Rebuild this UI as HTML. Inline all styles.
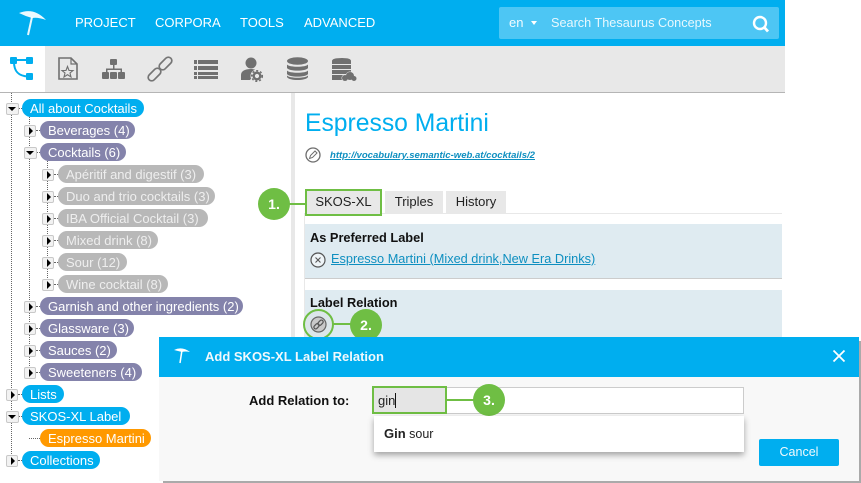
<!DOCTYPE html>
<html><head><meta charset="utf-8">
<style>
html,body{margin:0;padding:0;background:#fff}
body{width:861px;height:483px;position:relative;overflow:hidden;font-family:"Liberation Sans",sans-serif}
.a{position:absolute}
.nav{position:absolute;top:14px;color:#fff;font-size:13px;line-height:17px;white-space:nowrap}
.p{position:absolute;height:18px;border-radius:9px;color:#fff;font-size:13px;line-height:19px;padding-left:8px;box-sizing:border-box;white-space:nowrap}
.b{background:#00aeef}.v{background:#8483ab}.g{background:#b8b8b8;color:#eee}.o{background:#ff9900}
.t{position:absolute;width:12px;height:12px;box-sizing:border-box;border:1px solid #c8c8c8;border-radius:2px;background:#f2f2f2}
.t.r:after{content:"";position:absolute;left:4px;top:1px;border-left:4px solid #000;border-top:4px solid transparent;border-bottom:4px solid transparent}
.t.d:after{content:"";position:absolute;left:1px;top:3px;border-top:4px solid #000;border-left:4px solid transparent;border-right:4px solid transparent}
.dv{position:absolute;border-left:1px dotted #666;width:0}
.dh{position:absolute;border-top:1px dotted #666;height:0;width:4px}
.tab{position:absolute;background:#e8e8e8;color:#222;font-size:13px;text-align:center;box-sizing:border-box}
.c{position:absolute;width:32px;height:32px;border-radius:50%;background:#6fbe44;color:#fff;font-weight:bold;font-size:14px;line-height:33px;text-align:center}
.ln{position:absolute;height:2px;background:#6fbe44}
</style></head><body>

<div class="a" style="left:0;top:0;width:785px;height:46px;background:#00aeef"></div>
<svg class="a" style="left:0;top:0" width="60" height="46"><path d="M19 13Q34 7 46 20Q38 17 32 18Q25 16 19 13Z" fill="#fff" opacity=".92"/><path d="M32 17L28 35" stroke="#fff" stroke-width="2" opacity=".9"/></svg>
<div class="nav" style="left:75px">PROJECT</div>
<div class="nav" style="left:155px">CORPORA</div>
<div class="nav" style="left:240px">TOOLS</div>
<div class="nav" style="left:304px">ADVANCED</div>
<div class="a" style="left:499px;top:7px;width:280px;height:32px;background:#4dc6f4;border-radius:2px"></div>
<div class="a" style="left:509px;top:14px;color:#f2fbff;font-size:13px;line-height:17px">en</div>
<div class="a" style="left:531px;top:21px;border-top:4px solid #fff;border-left:3px solid transparent;border-right:3px solid transparent"></div>
<div class="a" style="left:551px;top:15px;color:#e8f8fe;font-size:12.700px;line-height:17px;white-space:nowrap">Search Thesaurus Concepts</div>
<svg class="a" style="left:750px;top:14px" width="22" height="20"><circle cx="10" cy="9" r="6" fill="none" stroke="#fff" stroke-width="2.400"/><path d="M14 13L18 17.500" stroke="#fff" stroke-width="2.800"/></svg>

<div class="a" style="left:0;top:46px;width:785px;height:46px;background:#e8e8e8"></div>
<div class="a" style="left:0;top:92px;width:785px;height:1px;background:#b5b5b5"></div>
<div class="a" style="left:0;top:46px;width:45px;height:46px;background:#fff"></div>
<svg class="a" style="left:0;top:46px" width="380" height="46">
<g fill="#00aeef"><rect x="10" y="11" width="7" height="7" rx="1"/><rect x="26" y="11" width="7" height="7" rx="1"/><rect x="26" y="27" width="7" height="7" rx="1"/></g>
<path d="M15 14H28M14 16C14 26 19 30 28 30.500" fill="none" stroke="#00aeef" stroke-width="2"/>
<g fill="none" stroke="#707070" stroke-width="1.600"><path d="M59 12H71L77 18V33H59Z"/><path d="M71 12V18H77" stroke-width="1.200"/><path d="M67.500 20.500L69 24.500H73L70 27L71 31L67.500 28.700L64 31L65 27L62 24.500H66Z" stroke-width="1.100"/></g>
<g fill="#707070"><rect x="110" y="13" width="7" height="6" rx="1"/><rect x="102" y="26" width="7" height="7" rx="1"/><rect x="110" y="26" width="7" height="7" rx="1"/><rect x="118" y="26" width="7" height="7" rx="1"/><path d="M113 19h1.500v3.500h7.500v3.500h-1.500v-2h-13v2h-1.500v-3.500h7z"/></g>
<g fill="none" stroke="#757575" stroke-width="1.700"><rect x="147" y="25" width="15" height="7" rx="3.500" transform="rotate(-45 154.500 28.500)"/><rect x="158" y="14" width="15" height="7" rx="3.500" transform="rotate(-45 165.500 17.500)"/></g>
<g fill="#707070"><rect x="194" y="14" width="3" height="4"/><rect x="198" y="14" width="20" height="4"/><rect x="194" y="20" width="3" height="4"/><rect x="198" y="20" width="20" height="4"/><rect x="194" y="26" width="3" height="3"/><rect x="198" y="26" width="20" height="3"/><rect x="194" y="30" width="3" height="3"/><rect x="198" y="30" width="20" height="3"/></g>
<g fill="#707070"><circle cx="251" cy="17" r="5.500"/><path d="M241 34V29C241 25 245 23 251 23C254 23 256 24 257 25L250 34Z"/></g>
<circle cx="257" cy="30" r="6.500" fill="#e8e8e8"/><circle cx="257" cy="30" r="3.300" fill="none" stroke="#707070" stroke-width="2.400"/><circle cx="257" cy="30" r="5.300" fill="none" stroke="#707070" stroke-width="1.500" stroke-dasharray="2 2"/>
<g fill="#707070"><ellipse cx="297.500" cy="15" rx="10.500" ry="3.800"/><path d="M287 18.500C289 21.500 306 21.500 308 18.500V22C306 25.500 289 25.500 287 22Z"/><path d="M287 24.500C289 27.500 306 27.500 308 24.500V28C306 31.500 289 31.500 287 28Z"/><path d="M287 29.500C289 32.500 306 32.500 308 29.500V31C306 35 289 35 287 31Z"/></g>
<g fill="#707070"><path d="M332 15Q332 12 342 12Q351 12 351 15V18H332Z"/><rect x="332" y="19" width="19" height="4"/><rect x="332" y="24" width="19" height="4"/><rect x="332" y="29" width="19" height="5"/></g>
<g fill="#707070" stroke="#e8e8e8"><circle cx="345" cy="32" r="3"/><circle cx="350" cy="30" r="4"/><circle cx="354" cy="32.500" r="2.500"/></g><g fill="#707070"><circle cx="345" cy="32" r="3"/><circle cx="350" cy="30" r="4"/><circle cx="354" cy="32.500" r="2.500"/></g>
</svg>

<!-- tree lines -->
<div class="dv" style="left:11px;top:93px;height:367px"></div>
<div class="dv" style="left:29px;top:117px;height:255px"></div>
<div class="dv" style="left:47px;top:161px;height:123px"></div>
<div class="dh" style="left:18px;top:108px"></div><div class="dh" style="left:18px;top:394px"></div><div class="dh" style="left:18px;top:416px"></div><div class="dh" style="left:18px;top:460px"></div>
<div class="dh" style="left:29px;top:438px;width:11px"></div>
<div class="dh" style="left:36px;top:130px"></div><div class="dh" style="left:36px;top:152px"></div><div class="dh" style="left:36px;top:306px"></div><div class="dh" style="left:36px;top:328px"></div><div class="dh" style="left:36px;top:350px"></div><div class="dh" style="left:36px;top:372px"></div>
<div class="dh" style="left:54px;top:174px"></div><div class="dh" style="left:54px;top:196px"></div><div class="dh" style="left:54px;top:218px"></div><div class="dh" style="left:54px;top:240px"></div><div class="dh" style="left:54px;top:262px"></div><div class="dh" style="left:54px;top:284px"></div>

<div class="t d" style="left:6px;top:103px;width:13px"></div><div class="p b" style="left:22px;top:99px;width:122px">All about Cocktails</div>
<div class="t r" style="left:24px;top:125px"></div><div class="p v" style="left:40px;top:121px;width:95px">Beverages (4)</div>
<div class="t d" style="left:24px;top:147px;width:13px"></div><div class="p v" style="left:40px;top:143px;width:86px">Cocktails (6)</div>
<div class="t r" style="left:42px;top:169px"></div><div class="p g" style="left:58px;top:165px;width:146px">Apéritif and digestif (3)</div>
<div class="t r" style="left:42px;top:191px"></div><div class="p g" style="left:58px;top:187px;width:157px">Duo and trio cocktails (3)</div>
<div class="t r" style="left:42px;top:213px"></div><div class="p g" style="left:58px;top:209px;width:150px">IBA Official Cocktail (3)</div>
<div class="t r" style="left:42px;top:235px"></div><div class="p g" style="left:58px;top:231px;width:100px">Mixed drink (8)</div>
<div class="t r" style="left:42px;top:257px"></div><div class="p g" style="left:58px;top:253px;width:69px">Sour (12)</div>
<div class="t r" style="left:42px;top:279px"></div><div class="p g" style="left:58px;top:275px;width:110px">Wine cocktail (8)</div>
<div class="t r" style="left:24px;top:301px"></div><div class="p v" style="left:40px;top:297px;width:203px">Garnish and other ingredients (2)</div>
<div class="t r" style="left:24px;top:323px"></div><div class="p v" style="left:40px;top:319px;width:94px">Glassware (3)</div>
<div class="t r" style="left:24px;top:345px"></div><div class="p v" style="left:40px;top:341px;width:77px">Sauces (2)</div>
<div class="t r" style="left:24px;top:367px"></div><div class="p v" style="left:40px;top:363px;width:102px">Sweeteners (4)</div>
<div class="t r" style="left:6px;top:389px"></div><div class="p b" style="left:22px;top:385px;width:42px">Lists</div>
<div class="t d" style="left:6px;top:411px;width:13px"></div><div class="p b" style="left:22px;top:407px;width:108px">SKOS-XL Label</div>
<div class="p o" style="left:40px;top:429px;width:111px">Espresso Martini</div>
<div class="t r" style="left:6px;top:455px"></div><div class="p b" style="left:22px;top:451px;width:78px">Collections</div>

<!-- splitter -->
<div class="a" style="left:291px;top:93px;width:4px;height:244px;background:#e8e8e8"></div>

<!-- right content -->
<div class="a" style="left:305px;top:109px;color:#00aeef;font-size:24.700px;line-height:30px;white-space:nowrap">Espresso Martini</div>
<svg class="a" style="left:305px;top:146px" width="18" height="18"><circle cx="8" cy="9" r="7" fill="none" stroke="#6d6d6d" stroke-width="1.300"/><path d="M4.500 12.500L5.500 9.500L10 5L12 7L7.500 11.500Z" fill="none" stroke="#6d6d6d"/></svg>
<div class="a" style="left:330px;top:150px;color:#0e8fc0;font-size:9.550px;font-weight:bold;font-style:italic;line-height:12px;text-decoration:underline;white-space:nowrap">http://vocabulary.semantic-web.at/cocktails/2</div>

<div class="a" style="left:305px;top:213px;width:477px;height:1px;background:#e8e8e8"></div>
<div class="a" style="left:304px;top:213px;width:1px;height:124px;background:#e8e8e8"></div>
<div class="tab" style="left:305px;top:189px;width:77px;height:27px;border:2px solid #6fbe44;line-height:22px">SKOS-XL</div>
<div class="tab" style="left:385px;top:191px;width:58px;height:22px;line-height:21px">Triples</div>
<div class="tab" style="left:446px;top:191px;width:60px;height:22px;line-height:21px">History</div>

<div class="a" style="left:305px;top:224px;width:477px;height:54px;background:#dfebf1;border-bottom:1px solid #ccc"></div>
<div class="a" style="left:310px;top:230px;color:#111;font-weight:bold;font-size:12.800px;line-height:15px;white-space:nowrap">As Preferred Label</div>
<svg class="a" style="left:309px;top:251px" width="18" height="18"><circle cx="9" cy="9" r="7" fill="#eef4f7" stroke="#555" stroke-width="1.200"/><path d="M6.500 6.500L11.500 11.500M11.500 6.500L6.500 11.500" stroke="#555" stroke-width="1.100"/></svg>
<div class="a" style="left:331px;top:251px;color:#0e8fc0;font-size:12.750px;line-height:16px;text-decoration:underline;white-space:nowrap">Espresso Martini (Mixed drink,New Era Drinks)</div>

<div class="a" style="left:305px;top:290px;width:477px;height:47px;background:#dfebf1"></div>
<div class="a" style="left:310px;top:295px;color:#111;font-weight:bold;font-size:12.800px;line-height:15px;white-space:nowrap">Label Relation</div>
<svg class="a" style="left:301px;top:307px" width="34" height="34"><circle cx="17.500" cy="17.500" r="14.500" fill="#dce6ea" stroke="#6fbe44" stroke-width="2"/><circle cx="17.500" cy="17.500" r="7.500" fill="#c9c9c9" stroke="#666" stroke-width="1.200"/><g fill="none" stroke="#555" stroke-width="1.200"><rect x="12.500" y="17.500" width="6" height="3.500" rx="1.700" transform="rotate(-45 15.500 19.200)"/><rect x="16.500" y="14" width="6" height="3.500" rx="1.700" transform="rotate(-45 19.500 15.700)"/></g></svg>

<!-- annotations 1,2 -->
<div class="ln" style="left:288px;top:203px;width:18px"></div>
<div class="c" style="left:258px;top:188px">1.</div>
<div class="ln" style="left:333px;top:323px;width:20px"></div>
<div class="c" style="left:350px;top:309px">2.</div>

<!-- dialog -->
<div class="a" style="left:163px;top:341px;width:698px;height:142px;background:#aaa"></div>
<div class="a" style="left:159px;top:337px;width:700px;height:144px;background:#f8f8f8"></div>
<div class="a" style="left:159px;top:337px;width:700px;height:40px;background:#00aeef"></div>
<svg class="a" style="left:170px;top:345px" width="24" height="22"><path d="M4 5Q12 1 20 7Q15 6 12 7Q8 6 4 5Z" fill="#fff"/><path d="M12 5L10 18" stroke="#fff" stroke-width="1.500"/></svg>
<div class="a" style="left:205px;top:349px;color:#f0f8fc;font-weight:bold;font-size:13px;line-height:16px;white-space:nowrap">Add SKOS-XL Label Relation</div>
<svg class="a" style="left:831px;top:348px" width="16" height="16"><path d="M2.500 2.500L13.500 13.500M13.500 2.500L2.500 13.500" stroke="#fff" stroke-width="1.800"/></svg>
<div class="a" style="left:249px;top:393px;color:#111;font-weight:bold;font-size:13px;line-height:16px;white-space:nowrap">Add Relation to:</div>
<div class="a" style="left:372px;top:387px;width:372px;height:27px;box-sizing:border-box;background:#fff;border:1px solid #ccc"></div>
<div class="a" style="left:372px;top:386px;width:75px;height:28px;box-sizing:border-box;background:#e5e5e5;border:2px solid #6fbe44"></div>
<div class="a" style="left:378px;top:393px;color:#222;font-size:13px;line-height:16px">gin</div>
<div class="a" style="left:395px;top:393px;width:1px;height:15px;background:#111"></div>
<div class="ln" style="left:447px;top:399px;width:28px"></div>
<div class="c" style="left:473px;top:384px">3.</div>
<div class="a" style="left:374px;top:416px;width:370px;height:36px;background:#fff;box-shadow:0 3px 6px rgba(0,0,0,.35)"></div>
<div class="a" style="left:384px;top:426px;color:#222;font-size:12.500px;line-height:16px;white-space:nowrap"><b style="font-size:13px">Gin</b> sour</div>
<div class="a" style="left:759px;top:439px;width:80px;height:27px;background:#00aeef;border-radius:2px;color:#f0f9fd;font-size:12.500px;line-height:27px;text-align:center">Cancel</div>
</body></html>
